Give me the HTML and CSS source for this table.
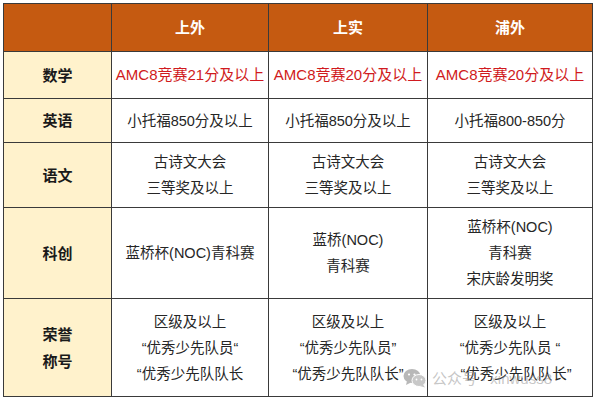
FILE: index.html
```html
<!DOCTYPE html>
<html lang="zh">
<head>
<meta charset="utf-8">
<link rel="stylesheet" href="styles.css">
</head>
<body>
<div class="wrap">
<table class="grid">
  <colgroup>
    <col class="c1"><col class="c2"><col class="c3"><col class="c4">
  </colgroup>
  <tr class="head">
    <th></th><th>上外</th><th>上实</th><th>浦外</th>
  </tr>
  <tr class="r-math">
    <td class="label">数学</td>
    <td class="red">AMC8竞赛21分及以上</td>
    <td class="red">AMC8竞赛20分及以上</td>
    <td class="red">AMC8竞赛20分及以上</td>
  </tr>
  <tr class="r-eng">
    <td class="label">英语</td>
    <td>小托福850分及以上</td>
    <td>小托福850分及以上</td>
    <td>小托福800-850分</td>
  </tr>
  <tr class="r-chn">
    <td class="label">语文</td>
    <td>古诗文大会<br>三等奖及以上</td>
    <td>古诗文大会<br>三等奖及以上</td>
    <td>古诗文大会<br>三等奖及以上</td>
  </tr>
  <tr class="r-sci">
    <td class="label">科创</td>
    <td>蓝桥杯(NOC)青科赛</td>
    <td>蓝桥(NOC)<br>青科赛</td>
    <td>蓝桥杯(NOC)<br>青科赛<br>宋庆龄发明奖</td>
  </tr>
  <tr class="r-hon">
    <td class="label">荣誉<br>称号</td>
    <td>区级及以上<br>“优秀少先队员“<br>“优秀少先队队长</td>
    <td>区级及以上<br>“优秀少先队员”<br>“优秀少先队队长”</td>
    <td>区级及以上<br>“优秀少先队员 “<br><span class="shift">“优秀少先队队长”</span></td>
  </tr>
</table>
<div class="watermark">
  <svg class="wm-icon" width="24" height="20" viewBox="0 0 24 20">
    <ellipse cx="9" cy="8" rx="8.5" ry="7" fill="#b8b8b8"/>
    <path d="M4 13 L3 17 L8 14.5 Z" fill="#b8b8b8"/>
    <ellipse cx="16" cy="12.5" rx="7" ry="6" fill="#c8c8c8" stroke="#fff" stroke-width="1"/>
    <path d="M20 16.5 L22 19.5 L17 18 Z" fill="#c8c8c8"/>
    <circle cx="6" cy="6.5" r="1.1" fill="#fff"/>
    <circle cx="11.5" cy="6.5" r="1.1" fill="#fff"/>
    <circle cx="13.5" cy="11.5" r="0.9" fill="#fff"/>
    <circle cx="18.5" cy="11.5" r="0.9" fill="#fff"/>
  </svg>
  <span class="wm-text">公众号 · xinwuss8</span>
</div>
</div>
</body>
</html>
```
FILE: styles.css
```css
html, body {
  margin: 0;
  padding: 0;
  background: #ffffff;
}
body {
  padding: 3px 0 0 3px;
  font-family: "Liberation Sans", "Noto Sans CJK SC", sans-serif;
}
.wrap {
  position: relative;
  width: 589px;
}
.grid {
  border-collapse: collapse;
  table-layout: fixed;
  width: 589px;
  border: 1.5px solid #3a3a3a;
}
.c1 { width: 108px; }
.c2 { width: 157px; }
.c3 { width: 159px; }
.c4 { width: 165px; }
.grid th, .grid td {
  border: 1px solid #3a3a3a;
  padding: 0;
  text-align: center;
  vertical-align: middle;
  font-size: 14.5px;
  line-height: 26px;
  color: #262626;
}
.grid th {
  background: #c55a11;
  color: #ffffff;
  font-weight: bold;
  font-size: 15px;
}
.head { height: 48px; }
.r-math { height: 47px; }
.r-eng { height: 44px; }
.r-chn { height: 65px; }
.r-sci { height: 91px; }
.r-hon { height: 98px; }
.grid td.label {
  background: #fff2cc;
  font-weight: bold;
  font-size: 15px;
  line-height: 27px;
  color: #1a1a1a;
}
.grid td.red {
  color: #d01a20;
  font-size: 15px;
}
.shift {
  position: relative;
  left: 6px;
}
.watermark {
  position: absolute;
  left: 400px;
  top: 364px;
  display: flex;
  align-items: center;
  gap: 5px;
  pointer-events: none;
}
.wm-text {
  font-size: 15px;
  color: rgba(150, 150, 150, 0.55);
  white-space: nowrap;
}
```
